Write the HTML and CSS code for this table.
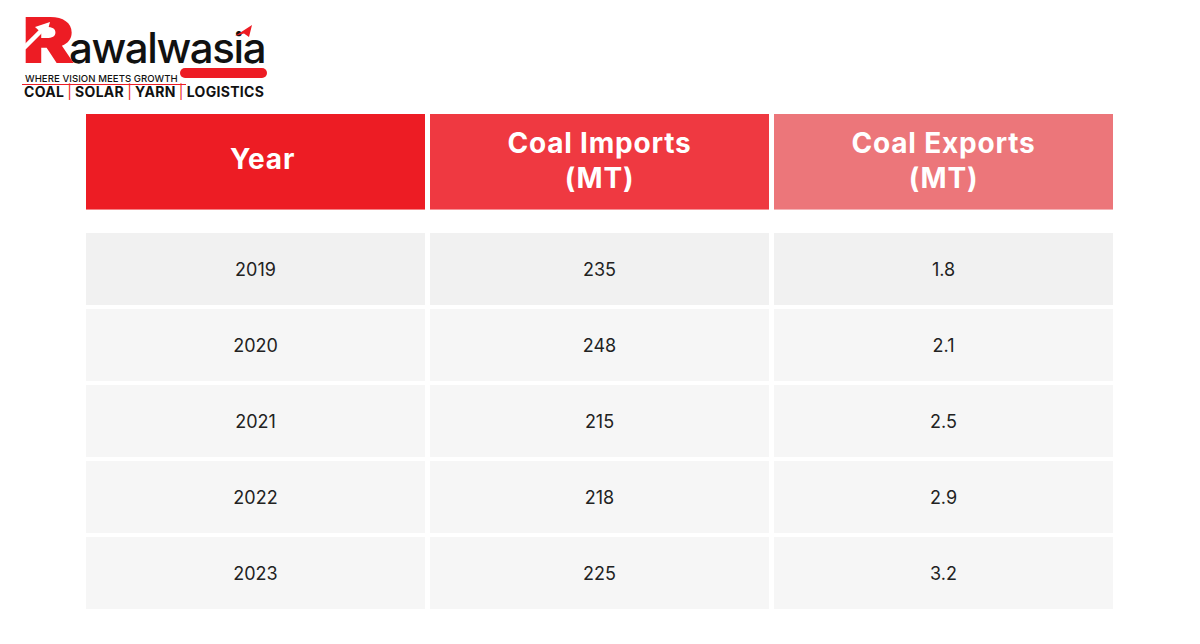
FILE: index.html
```html
<!DOCTYPE html>
<html>
<head>
<meta charset="utf-8">
<link rel="stylesheet" href="styles.css">
</head>
<body>
<div class="page">
  <header class="logo">
    <div class="brand">
      <span class="brand-r">R</span><span class="brand-rest">awalwasia</span>
      <svg class="r-arrow" width="32" height="32" viewBox="0 0 32 32">
        <path d="M1 27 L18 10" stroke="#fff" stroke-width="4.5" fill="none"/>
        <path d="M12 6 L27 1 L23 16 Z" fill="#fff"/>
      </svg>
      <svg class="i-accent" width="20" height="14" viewBox="0 0 20 14">
        <path d="M1 12 L18 1 L15 13 L10 9.5 Z" fill="#ed1c24"/>
      </svg>
    </div>
    <div class="tagline">
      <span class="tag-text">WHERE VISION MEETS GROWTH</span>
      <span class="tag-bar"></span>
    </div>
    <div class="sectors">COAL<span class="pipe">|</span>SOLAR<span class="pipe">|</span>YARN<span class="pipe">|</span>LOGISTICS</div>
  </header>

  <section class="table">
    <div class="head-row">
      <div class="hcell h1">Year</div>
      <div class="hcell h2">Coal Imports<br>(MT)</div>
      <div class="hcell h3">Coal Exports<br>(MT)</div>
    </div>
    <div class="body-rows">
      <div class="row first"><div class="cell">2019</div><div class="cell">235</div><div class="cell">1.8</div></div>
      <div class="row"><div class="cell">2020</div><div class="cell">248</div><div class="cell">2.1</div></div>
      <div class="row"><div class="cell">2021</div><div class="cell">215</div><div class="cell">2.5</div></div>
      <div class="row"><div class="cell">2022</div><div class="cell">218</div><div class="cell">2.9</div></div>
      <div class="row"><div class="cell">2023</div><div class="cell">225</div><div class="cell">3.2</div></div>
    </div>
  </section>
</div>
</body>
</html>
```

FILE: styles.css
```css
* { box-sizing: border-box; }
html, body { margin: 0; padding: 0; background: #fff; }
body { font-family: "Inter", "Open Sans", sans-serif; color: #222; width: 1200px; height: 644px; overflow: hidden; }

.page { padding: 14px 0 0 0; }

.logo { margin-left: 22px; width: 246px; }
.brand { position: relative; height: 52px; display: flex; align-items: baseline; white-space: nowrap; }
.brand-r { display: inline-block; width: 47px; font-family: "Inter", sans-serif; font-weight: 900; font-size: 63px; color: #ed1c24; line-height: 52px; transform: scaleX(1.25); transform-origin: left bottom; }
.brand-rest { font-family: "Inter", sans-serif; font-weight: 500; font-size: 42px; color: #111; line-height: 52px; letter-spacing: -1.4px; }
.r-arrow { position: absolute; left: 1px; top: 7px; }
.i-accent { position: absolute; left: 212px; top: 10px; }

.tagline { position: relative; height: 15px; }
.tag-text { position: relative; z-index: 1; display: inline-block; font-size: 9.6px; font-weight: 500; color: #111; letter-spacing: 0.05px; line-height: 10px; padding-left: 3px; border-bottom: 1.5px solid #ed1c24; padding-right: 8px; }
.tag-bar { position: absolute; left: 158px; top: 2px; width: 87px; height: 10px; background: #ed1c24; border-radius: 5px; }

.sectors { margin-top: 3px; font-size: 14px; font-weight: 700; color: #111; letter-spacing: 0.3px; line-height: 16px; padding-left: 2px; white-space: nowrap; }
.pipe { color: #ed1c24; font-weight: 400; margin: 0 3px; }

.table { margin: 14px 0 0 86px; width: 1027px; }
.head-row { display: grid; grid-template-columns: 339px 339px 339px; column-gap: 5px; }
.hcell { height: 96px; display: flex; align-items: center; justify-content: center; text-align: center; color: #fff; font-weight: 700; font-size: 28px; letter-spacing: 0.8px; line-height: 35px; border-bottom: 1px solid rgba(255,255,255,0.45); }
.h1 { background: #ed1c24; padding-left: 14px; padding-bottom: 5px; }
.h2 { background: #ef3941; padding-bottom: 2px; }
.h3 { background: #ec767a; padding-bottom: 2px; }

.body-rows { margin-top: 23px; display: flex; flex-direction: column; gap: 4px; }
.row { display: grid; grid-template-columns: 339px 339px 339px; column-gap: 5px; }
.cell { height: 72px; background: #f6f6f6; display: flex; align-items: center; justify-content: center; font-size: 18px; font-weight: 400; color: #222; }
.row.first .cell { background: #f1f1f1; }
```
